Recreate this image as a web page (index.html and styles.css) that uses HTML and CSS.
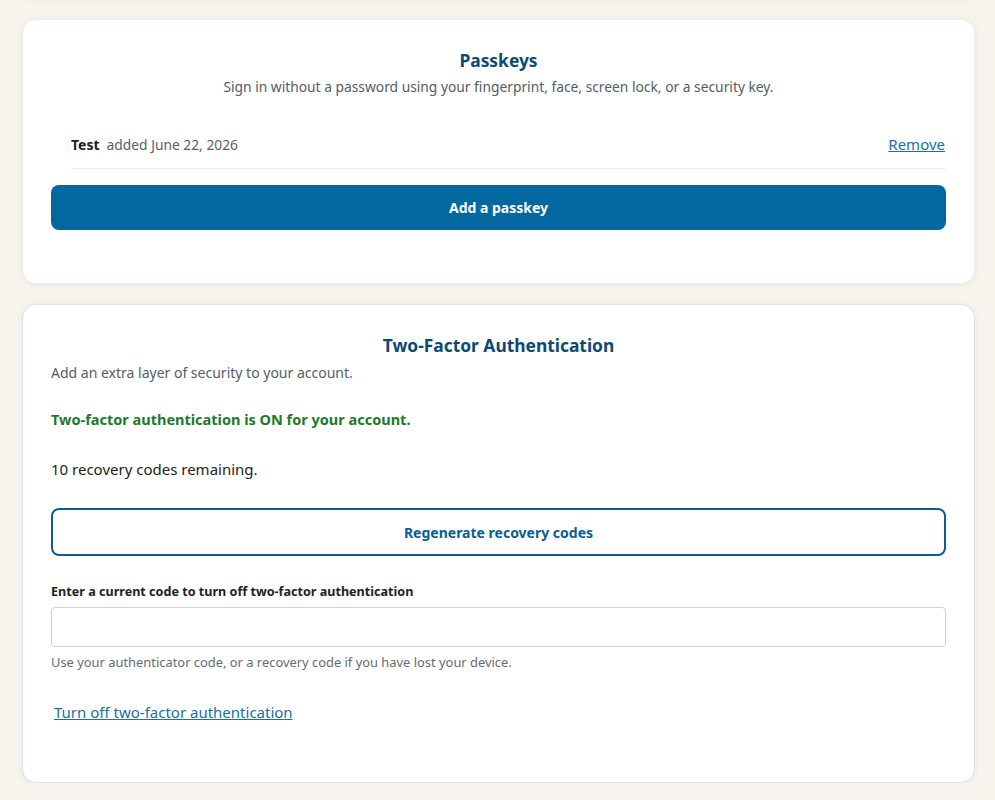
FILE: index.html
```html
<!DOCTYPE html>
<html lang="en">
<head>
    <meta charset="UTF-8">
    <meta name="viewport" content="width=device-width, initial-scale=1.0">
    <title>Security settings</title>
    <link rel="stylesheet" href="styles.css">
</head>
<body>
    <div id="page">
        <div class="card card-prev"></div>

        <section class="card">
            <h2 class="card-title">Passkeys</h2>
            <p class="card-sub">Sign in without a password using your fingerprint, face, screen lock, or a security key.</p>
            <ul class="passkeys">
                <li class="passkey">
                    <span class="passkey-name">Test</span>
                    <span class="passkey-date">added June 22, 2026</span>
                    <a href="#" class="passkey-remove">Remove</a>
                </li>
            </ul>
            <button class="btn-primary">Add a passkey</button>
        </section>

        <section class="card card-2fa">
            <h2 class="card-title">Two-Factor Authentication</h2>
            <p class="card-desc">Add an extra layer of security to your account.</p>
            <p class="status-on">Two-factor authentication is ON for your account.</p>
            <p class="codes-left">10 recovery codes remaining.</p>
            <button class="btn-outline">Regenerate recovery codes</button>
            <form id="disableForm">
                <label for="codeInput">Enter a current code to turn off two-factor authentication</label>
                <input type="text" id="codeInput">
                <p class="hint">Use your authenticator code, or a recovery code if you have lost your device.</p>
                <button type="submit" class="btn-link">Turn off two-factor authentication</button>
            </form>
        </section>
    </div>
</body>
</html>
```

FILE: styles.css
```css
body {
    font-family: "Segoe UI", "Noto Sans", sans-serif;
    background-color: #f7f4ee;
    color: #222;
    margin: 0;
    padding: 0;
}
#page {
    display: flex;
    flex-direction: column;
    gap: 20px;
    padding: 0 20px 0 22px;
    margin-top: -53px;
}
.card {
    background-color: #fff;
    border: 1px solid #f0eeea;
    border-radius: 14px;
    box-shadow: 0 1px 6px rgba(80, 70, 50, 0.08);
    padding: 28px 28px 53px;
}
.card-prev {
    height: 50px;
    padding: 0;
}
.card-2fa {
    border-color: #dde3ec;
    padding-bottom: 59px;
}
.card-title {
    font-size: 17.4px;
    line-height: 24px;
    font-weight: 700;
    color: #0b4a73;
    text-align: center;
    margin: 0;
}
.card-sub {
    font-size: 13.8px;
    line-height: 20px;
    color: #555c66;
    text-align: center;
    margin: 5px 0 0;
}
.passkeys {
    list-style: none;
    margin: 25px 0 0;
    padding: 0 0 0 20px;
}
.passkey {
    display: flex;
    align-items: baseline;
    padding: 12px 0 13px;
    border-bottom: 1px solid #ececec;
    line-height: 20px;
}
.passkey-name {
    font-size: 14px;
    font-weight: 700;
    color: #1b1f24;
}
.passkey-date {
    font-size: 13.8px;
    color: #5a6069;
    margin-left: 7px;
}
.passkey-remove {
    margin-left: auto;
    margin-right: 1px;
    font-size: 15px;
    color: #1c6ea4;
}
.btn-primary {
    display: block;
    width: 100%;
    height: 45px;
    margin-top: 16px;
    border: none;
    border-radius: 8px;
    background-color: #02689f;
    color: #fff;
    font-family: inherit;
    font-size: 14px;
    font-weight: 700;
    cursor: pointer;
}
.card-desc {
    font-size: 14px;
    line-height: 20px;
    color: #555c66;
    margin: 6px 0 0;
}
.status-on {
    font-size: 14.5px;
    line-height: 22px;
    font-weight: 700;
    color: #1c7a28;
    margin: 25px 0 0;
}
.codes-left {
    font-size: 15px;
    line-height: 22px;
    margin: 28px 0 0;
}
.btn-outline {
    display: block;
    width: 100%;
    height: 48px;
    margin-top: 28px;
    border: 2px solid #0b5e92;
    border-radius: 8px;
    background-color: #fff;
    color: #0b5e92;
    font-family: inherit;
    font-size: 14px;
    font-weight: 700;
    cursor: pointer;
}
#disableForm {
    display: flex;
    flex-direction: column;
    align-items: flex-start;
    margin-top: 27px;
}
#disableForm label {
    font-size: 12.6px;
    line-height: 18px;
    font-weight: 700;
}
#codeInput {
    box-sizing: border-box;
    width: 100%;
    height: 40px;
    margin-top: 6px;
    border: 1px solid #cfd0d6;
    border-radius: 4px;
    padding: 0 10px;
    font-family: inherit;
    font-size: 14px;
}
.hint {
    font-size: 12.9px;
    line-height: 18px;
    color: #666b72;
    margin: 6px 0 0;
}
.btn-link {
    margin-top: 30px;
    padding: 0 0 0 3px;
    border: none;
    background: none;
    font-family: inherit;
    font-size: 15px;
    line-height: 22px;
    color: #1c6ea4;
    text-decoration: underline;
    cursor: pointer;
}
```
